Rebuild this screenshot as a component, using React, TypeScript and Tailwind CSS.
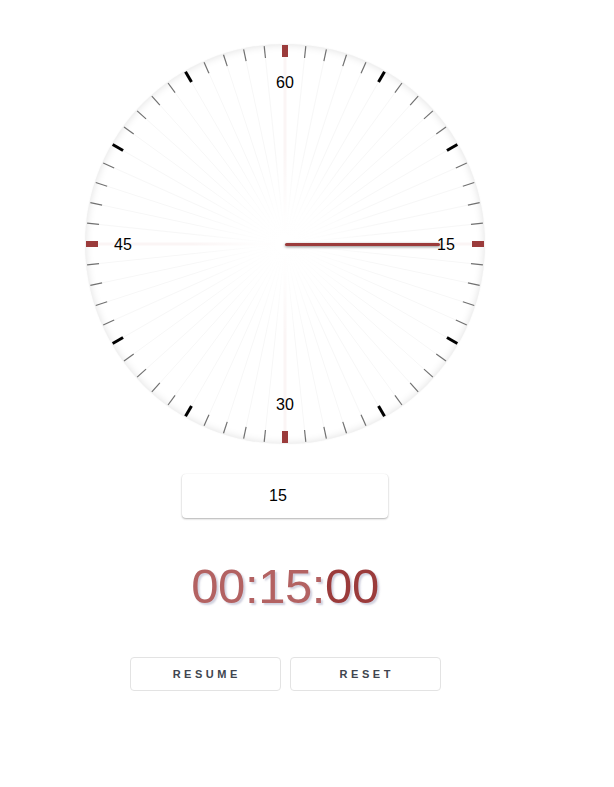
import React from "react";

const C = 200;

function Clock() {
  const ticks = [];
  const rays = [];
  for (let i = 0; i < 60; i++) {
    const a = (i * 6 * Math.PI) / 180;
    const sx = Math.sin(a);
    const cy = -Math.cos(a);
    const red = i % 15 === 0;
    const major = i % 5 === 0;
    const r1 = 187;
    const r2 = 199;
    rays.push(
      <line
        key={"r" + i}
        x1={C + sx * 10}
        y1={C + cy * 10}
        x2={C + sx * r1}
        y2={C + cy * r1}
        stroke={red ? "#fbf5f5" : "#f7f7f7"}
        strokeWidth={red ? 3 : 1}
      />
    );
    ticks.push(
      <line
        key={"t" + i}
        x1={C + sx * r1}
        y1={C + cy * r1}
        x2={C + sx * r2}
        y2={C + cy * r2}
        stroke={red ? "#9b3b3b" : major ? "#000" : "#707070"}
        strokeWidth={red ? 6 : major ? 3 : 1.2}
      />
    );
  }
  return (
    <div className="relative w-[400px] h-[400px] rounded-full bg-white shadow-[inset_0_0_8px_rgba(0,0,0,0.13),0_0_2px_rgba(0,0,0,0.04)]">
      <svg width="400" height="400" viewBox="0 0 400 400" className="absolute inset-0">
        <defs>
          <radialGradient id="fade" cx="50%" cy="50%" r="50%">
            <stop offset="0%" stopColor="#fff" stopOpacity="1" />
            <stop offset="15%" stopColor="#fff" stopOpacity="0.9" />
            <stop offset="50%" stopColor="#fff" stopOpacity="0" />
          </radialGradient>
        </defs>
        {rays}
        <circle cx={C} cy={C} r={190} fill="url(#fade)" />
        {ticks}
        <g
          style={{ fontFamily: "'Liberation Sans', Arial, sans-serif" }}
          fontSize="16"
          fill="#000"
          textAnchor="middle"
          dominantBaseline="central"
        >
          <text x={C} y={C - 162}>60</text>
          <text x={C + 161} y={C}>15</text>
          <text x={C} y={C + 160}>30</text>
          <text x={C - 162} y={C}>45</text>
        </g>
      </svg>
      <div className="absolute left-[200px] top-[199px] w-[155px] h-[3px] bg-[#9b3b3b] rounded-full shadow-[0_1px_3px_rgba(0,0,0,0.45)]" />
    </div>
  );
}

export default function App() {
  return (
    <div
      className="w-[570px] flex flex-col items-center pt-[44px] bg-white"
      style={{ fontFamily: "'Liberation Sans', Arial, sans-serif" }}
    >
      <Clock />
      <input
        readOnly
        value="15"
        className="mt-[30px] w-[206px] h-[44px] rounded-[4px] bg-white text-center text-[16px] text-black outline-none pr-[14px] shadow-[0_1px_2px_rgba(0,0,0,0.3),0_0_1px_rgba(0,0,0,0.08)]"
      />
      <div className="mt-[44px] text-[49px] leading-none tracking-[-0.4px] [text-shadow:2px_2px_2px_rgba(120,120,160,0.35)]">
        <span className="text-[#b36262]">00:15:</span>
        <span className="text-[#9b3b3b]">00</span>
      </div>
      <div className="mt-[46px] flex gap-[9px]">
        <button className="w-[151px] h-[34px] rounded-[4px] border border-[#e3e3e3] bg-white text-[11px] font-bold tracking-[0.32em] text-[#40454f] pl-[0.32em]">
          RESUME
        </button>
        <button className="w-[151px] h-[34px] rounded-[4px] border border-[#e3e3e3] bg-white text-[11px] font-bold tracking-[0.32em] text-[#40454f] pl-[0.32em]">
          RESET
        </button>
      </div>
    </div>
  );
}
